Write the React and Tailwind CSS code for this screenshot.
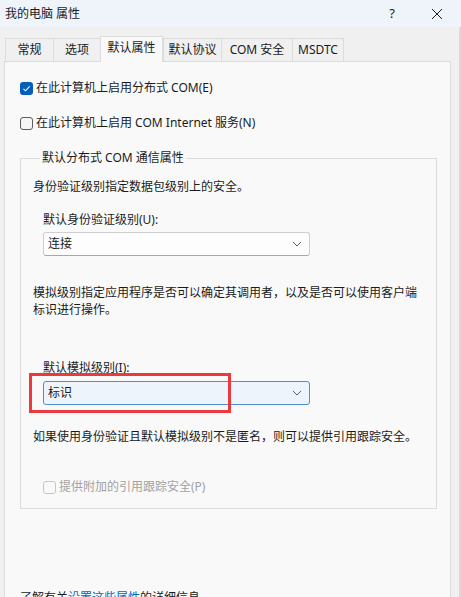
import React from "react";

const FONT = { fontFamily: "'Noto Sans', 'Noto Sans CJK SC', sans-serif" };

function Check({ checked, disabled }) {
  if (checked) {
    return (
      <span className="w-[13px] h-[13px] rounded-[3px] bg-[#005fb8] flex items-center justify-center shrink-0">
        <svg width="9" height="9" viewBox="0 0 9 9">
          <path d="M1.5 4.8 L3.6 6.8 L7.6 2.4" fill="none" stroke="#fff" strokeWidth="1.1" />
        </svg>
      </span>
    );
  }
  return (
    <span
      className={`w-[13px] h-[13px] rounded-[3px] border shrink-0 ${
        disabled ? "border-[#c6c6c6] bg-[#f9f9f9]" : "border-[#5c5c5c] bg-[#f6f6f6]"
      }`}
    />
  );
}

function Chevron() {
  return (
    <svg width="10" height="6" viewBox="0 0 10 6" className="shrink-0">
      <path d="M1 1 L5 5 L9 1" fill="none" stroke="#5a5a5a" strokeWidth="1" />
    </svg>
  );
}

function Select({ value, focused }) {
  return (
    <div
      className={`w-[267px] h-[24px] rounded-[3px] border flex items-center justify-between pl-[4px] pr-[7px] ${
        focused ? "bg-[#edf4fc] border-[#4f8fcf]" : "bg-[#fdfdfd] border-[#cfcfcf] border-b-[#a8a8a8]"
      }`}
    >
      <span className="text-[12px] leading-[18px] text-[#1b1b1b]">{value}</span>
      <Chevron />
    </div>
  );
}

const tabs = [
  { label: "常规", w: "w-[48px]" },
  { label: "选项", w: "w-[47px]" },
  { label: "默认属性", w: "w-[63px]", active: true },
  { label: "默认协议", w: "w-[58px]" },
  { label: "COM 安全", w: "w-[71px]" },
  { label: "MSDTC", w: "w-[52px]" },
];

export default function App() {
  return (
    <div className="w-[461px] h-[597px] overflow-hidden bg-[#f0f0f0] flex flex-col text-[#1b1b1b]" style={FONT}>
      {/* title bar */}
      <div className="h-[27px] shrink-0 bg-[#eef4f9] flex items-center justify-between pl-[5px]">
        <span className="text-[12px] leading-[18px]">我的电脑 属性</span>
        <div className="flex items-center h-full">
          <span className="w-[30px] text-center text-[13px] mr-[24px]">?</span>
          <svg width="12" height="12" viewBox="0 0 12 12" className="mr-[18px]">
            <path d="M1 1 L11 11 M11 1 L1 11" stroke="#1b1b1b" strokeWidth="1" />
          </svg>
        </div>
      </div>

      <div className="flex flex-1 min-h-0">
        <div className="flex flex-col pl-[4px] w-[451px]">
          {/* tabs */}
          <div className="h-[34px] shrink-0 flex items-end pl-[1px] relative z-10">
            {tabs.map((t) =>
              t.active ? (
                <div
                  key={t.label}
                  className={`${t.w} h-[26px] -mb-[1px] bg-[#f9f9f9] border border-b-0 border-[#dcdcdc] flex items-center justify-center text-[12px]`}
                >
                  <span className="-mt-[3px]">{t.label}</span>
                </div>
              ) : (
                <div
                  key={t.label}
                  className={`${t.w} h-[23px] bg-[#f0f0f0] border border-b-0 border-r-0 last:border-r border-[#dcdcdc] flex items-center justify-center text-[12px]`}
                >
                  {t.label}
                </div>
              )
            )}
          </div>

          {/* panel */}
          <div className="flex-1 bg-[#f9f9f9] border border-[#dcdcdc] pl-[15px]">
            <div className="mt-[16px] h-[20px] flex items-center gap-[3px]">
              <Check checked />
              <span className="text-[12px] leading-[20px]">在此计算机上启用分布式 COM(E)</span>
            </div>
            <div className="mt-[15px] h-[20px] flex items-center gap-[3px]">
              <Check />
              <span className="text-[12px] leading-[20px]">在此计算机上启用 COM Internet 服务(N)</span>
            </div>

            <fieldset className="mt-[16px] w-[417px] border border-[#dcdcdc] px-[12px] pb-[11px]">
              <legend className="ml-[7px] px-[2px] text-[12px] leading-[18px]">默认分布式 COM 通信属性</legend>
              <p className="mt-[11px] text-[12px] leading-[18px]">身份验证级别指定数据包级别上的安全。</p>
              <div className="ml-[10px]">
                <p className="mt-[15px] text-[12px] leading-[18px]">默认身份验证级别(U):</p>
                <div className="mt-[3px]">
                  <Select value="连接" />
                </div>
              </div>
              <p className="mt-[28px] text-[12px] leading-[17px] pr-[4px]">
                模拟级别指定应用程序是否可以确定其调用者，以及是否可以使用客户端标识进行操作。
              </p>
              <div className="ml-[10px]">
                <p className="mt-[41px] text-[12px] leading-[18px]">默认模拟级别(I):</p>
                <div className="mt-[4px] relative">
                  <Select value="标识" focused />
                  <div className="absolute -left-[14px] -top-[8px] w-[202px] h-[40px] border-[3px] border-[#ea3a3d] pointer-events-none" />
                </div>
              </div>
              <p className="mt-[23px] text-[12px] leading-[18px]">
                如果使用身份验证且默认模拟级别不是匿名，则可以提供引用跟踪安全。
              </p>
              <div className="mt-[31px] ml-[10px] h-[20px] flex items-center gap-[3px]">
                <Check disabled />
                <span className="text-[12px] leading-[20px] text-[#a2a2a2]">提供附加的引用跟踪安全(P)</span>
              </div>
            </fieldset>

            <p className="mt-[80px] text-[12px] leading-[18px]">
              了解有关<span className="text-[#0067c0]">设置这些属性</span>的详细信息。
            </p>
          </div>
        </div>
        <div className="flex-1" />
        <div className="w-[2px] bg-[#dadada]" />
      </div>
    </div>
  );
}
